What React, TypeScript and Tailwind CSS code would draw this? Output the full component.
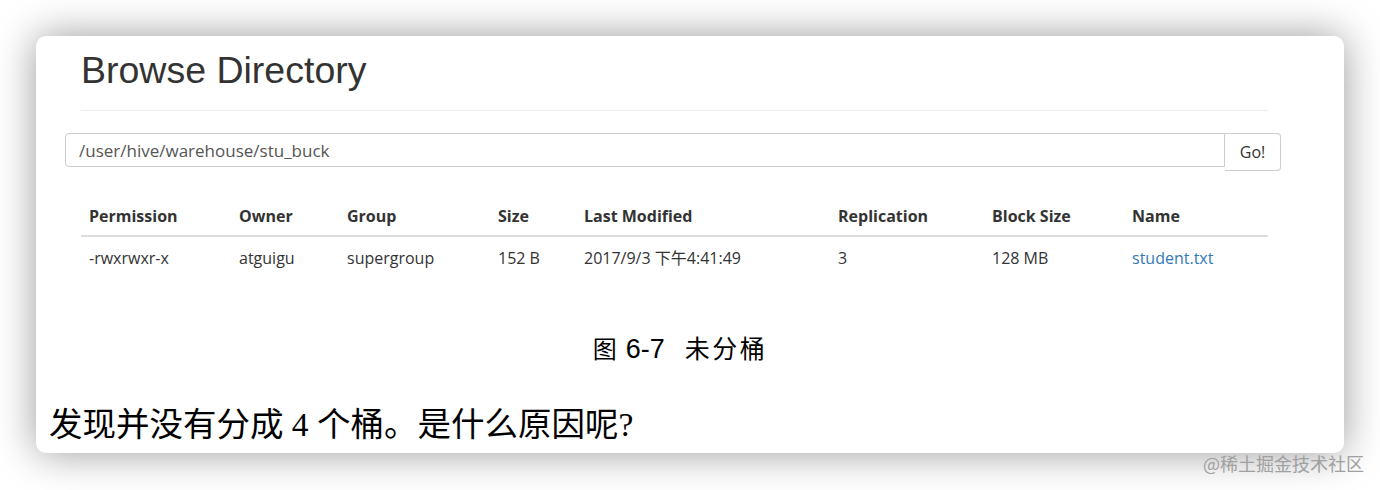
import React from "react";

const cols = [
  { h: "Permission", v: "-rwxrwxr-x", w: "w-[150px]" },
  { h: "Owner", v: "atguigu", w: "w-[108px]" },
  { h: "Group", v: "supergroup", w: "w-[151px]" },
  { h: "Size", v: "152 B", w: "w-[86px]" },
  { h: "Last Modified", v: "2017/9/3 下午4:41:49", w: "w-[254px]" },
  { h: "Replication", v: "3", w: "w-[154px]" },
  { h: "Block Size", v: "128 MB", w: "w-[140px]" },
  { h: "Name", v: "student.txt", w: "flex-1", link: true },
];

export default function App() {
  return (
    <div className="relative w-[1380px] h-[490px] bg-white overflow-hidden">
      <div className="ml-[36px] mt-[36px] w-[1308px] h-[417px] rounded-[10px] bg-white shadow-[0_0_40px_rgba(0,0,0,0.4)] flex flex-col">
        <div className="pl-[45px] pr-[76px] pt-[14px] flex flex-col" style={{ fontFamily: '"Open Sans", "Noto Sans CJK SC", sans-serif' }}>
          <h1 className="text-[37.5px] leading-[40px] text-[#333]" style={{ fontFamily: '"Liberation Sans", Arial, sans-serif' }}>
            Browse Directory
          </h1>
          <div className="mt-[20px] h-px bg-[#eee]" />
          <div className="mt-[22px] -ml-[16px] -mr-[13px] flex items-start">
            <div className="w-[1160px] h-[34px] border border-[#ccc] rounded-l-[4px] flex items-center pl-[13px] pt-[1px] text-[17px] text-[#555]">
              /user/hive/warehouse/stu_buck
            </div>
            <div className="flex-1 h-[38px] border border-[#ccc] border-l-0 rounded-[4px] rounded-l-none flex items-center justify-center text-[16px] text-[#333]">
              Go!
            </div>
          </div>
          <div className="mt-[25px] flex flex-col text-[16px] text-[#333]">
            <div className="flex h-[41px] items-center border-b-2 border-[#ddd] font-bold">
              {cols.map((c) => (
                <div key={c.h} className={`${c.w} px-[8px]`}>{c.h}</div>
              ))}
            </div>
            <div className="flex h-[42px] items-center">
              {cols.map((c) => (
                <div key={c.h} className={`${c.w} px-[8px] ${c.link ? "text-[#337ab7]" : ""}`}>{c.v}</div>
              ))}
            </div>
          </div>
        </div>
        <div className="mt-[55px] pr-[20px] flex justify-center items-baseline leading-[30px] text-black" style={{ fontFamily: '"Liberation Serif", "Noto Sans CJK SC", serif' }}>
          <span className="text-[24px]">图</span>
          <span className="ml-[9px] text-[27px]" style={{ fontFamily: '"Liberation Sans", Arial, sans-serif' }}>6-7</span>
          <span className="ml-[20px] text-[25px] tracking-[2.5px]">未分桶</span>
        </div>
        <div className="mt-[40px] pl-[13px] text-[33.5px] leading-[40px] text-black" style={{ fontFamily: '"Liberation Serif", "Noto Sans CJK SC", serif' }}>
          发现并没有分成 4 个桶。是什么原因呢?
        </div>
      </div>
      <div className="absolute left-[1203px] top-[452px] text-[18px] leading-[22px] text-[#a0a0a0]" style={{ fontFamily: '"Noto Sans CJK SC", sans-serif' }}>
        @稀土掘金技术社区
      </div>
    </div>
  );
}
